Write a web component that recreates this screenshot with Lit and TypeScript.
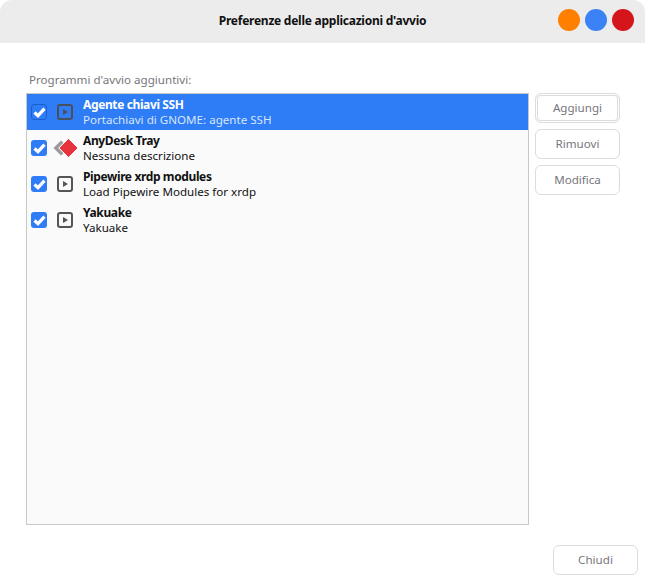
import { LitElement, html, css, svg } from "lit";
import { customElement } from "lit/decorators.js";

const rows = [
  { t: "Agente chiavi SSH", d: "Portachiavi di GNOME: agente SSH", sel: true, any: false },
  { t: "AnyDesk Tray", d: "Nessuna descrizione", sel: false, any: true },
  { t: "Pipewire xrdp modules", d: "Load Pipewire Modules for xrdp", sel: false, any: false },
  { t: "Yakuake", d: "Yakuake", sel: false, any: false },
];

const playIcon = svg`<svg class="icon" width="16" height="16" viewBox="0 0 16 16"><rect x="1" y="1" width="14" height="14" rx="2" fill="none" stroke="currentColor" stroke-width="2"/><path d="M6 5l5 3-5 3z" fill="currentColor"/></svg>`;
const anyIcon = svg`<svg width="26" height="20" viewBox="0 0 26 20"><path d="M9 2.500l-7.500 7.500 7.500 7.500 2.500-2.200-5.300-5.300 5.300-5.300z" fill="#9a9a9a"/><path d="M16.500 1.500l8.500 8.500-8.500 8.500-8.500-8.500z" fill="#e8333f" stroke="#e8333f" stroke-linejoin="round"/></svg>`;

@customElement("app-root")
export class AppRoot extends LitElement {
  static styles = css`
    :host { display: block; width: 645px; height: 582px; background: #fff; font-family: "Noto Sans", "Open Sans", sans-serif; font-size: 11.6px; color: #3d3d3d; overflow: hidden; }
    .head { height: 43px; padding-bottom: 2px; background: #ececec; border-radius: 12px 12px 0 0; display: flex; align-items: center; justify-content: center; position: relative; font-weight: 700; font-size: 12px; letter-spacing: -0.25px; color: #111; box-sizing: border-box; }
    .dots { position: absolute; right: 11px; top: 9px; display: flex; gap: 5px; }
    .dot { width: 22px; height: 22px; border-radius: 50%; }
    .body { padding: 29px 7px 0 26px; }
    .label { font-size: 11.6px; color: #77767b; height: 21px; line-height: 15px; padding-left: 3px; }
    .main { display: flex; gap: 6px; align-items: flex-start; }
    .list { width: 503px; height: 432px; box-sizing: border-box; border: 1px solid #c8c8c8; background: #fafafa; }
    .row { height: 36px; display: flex; align-items: center; box-sizing: border-box; padding-left: 4px; color: #111; }
    .row.sel { background: #2e7cf6; color: #fff; }
    .check { width: 16px; height: 16px; border-radius: 3px; background: #2e7cf6; box-sizing: border-box; display: flex; align-items: center; justify-content: center; flex: none; }
    .row.sel .check { border: 1px solid #1a5fd0; }
    .iconbox { width: 26px; margin-left: 5px; margin-right: 5px; height: 20px; display: flex; align-items: center; justify-content: center; color: #555; flex: none; }
    .row.sel .iconbox { color: #4a4f5c; }
    .text { display: flex; flex-direction: column; line-height: 15px; padding-bottom: 1px; }
    .title { font-weight: 700; font-size: 12px; letter-spacing: -0.38px; }
    .desc { font-size: 11.6px; }
    .row.sel .desc { color: #d8e6fd; }
    .side { display: flex; flex-direction: column; gap: 6px; width: 85px; }
    .btn { height: 30px; padding-bottom: 2px; box-sizing: border-box; border: 1px solid #dcdcdc; border-radius: 6px; display: flex; align-items: center; justify-content: center; color: #77767b; background: #fff; }
    .btn.focus { box-shadow: inset 0 0 0 1px #fff, inset 0 0 0 2px #dcdcdc; }
    .foot { display: flex; justify-content: flex-end; padding-top: 20px; }
    .close { width: 85px; }
  `;

  render() {
    return html`
      <div class="head">
        Preferenze delle applicazioni d'avvio
        <div class="dots">
          <div class="dot" style="background:#ff8000"></div>
          <div class="dot" style="background:#3b82f6"></div>
          <div class="dot" style="background:#d4161c"></div>
        </div>
      </div>
      <div class="body">
        <div class="label">Programmi d'avvio aggiuntivi:</div>
        <div class="main">
          <div class="list">
            ${rows.map(r => html`
              <div class="row ${r.sel ? "sel" : ""}">
                <div class="check"><svg width="13" height="11" viewBox="0 0 13 11"><path d="M1.500 5.500l3.500 3.200 6.500-7" fill="none" stroke="#fff" stroke-width="3.200"/></svg></div>
                <div class="iconbox">${r.any ? anyIcon : playIcon}</div>
                <div class="text"><span class="title">${r.t}</span><span class="desc">${r.d}</span></div>
              </div>`)}
          </div>
          <div class="side">
            <div class="btn focus">Aggiungi</div>
            <div class="btn">Rimuovi</div>
            <div class="btn">Modifica</div>
          </div>
        </div>
        <div class="foot"><div class="btn close">Chiudi</div></div>
      </div>
    `;
  }
}
